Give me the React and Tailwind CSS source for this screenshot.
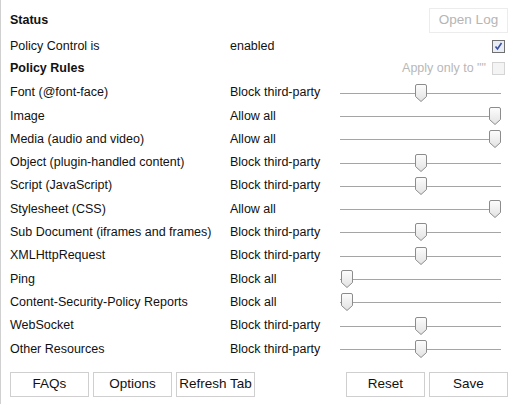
import React, { useState } from 'react';

const LEVELS = ['Block all', 'Block third-party', 'Allow all'];

const rules = [
  { name: 'Font (@font-face)', level: 1 },
  { name: 'Image', level: 2 },
  { name: 'Media (audio and video)', level: 2 },
  { name: 'Object (plugin-handled content)', level: 1 },
  { name: 'Script (JavaScript)', level: 1 },
  { name: 'Stylesheet (CSS)', level: 2 },
  { name: 'Sub Document (iframes and frames)', level: 1 },
  { name: 'XMLHttpRequest', level: 1 },
  { name: 'Ping', level: 0 },
  { name: 'Content-Security-Policy Reports', level: 0 },
  { name: 'WebSocket', level: 1 },
  { name: 'Other Resources', level: 1 },
];

const Thumb = () => (
  <svg width="12" height="18" viewBox="0 0 12 18" className="block">
    <defs>
      <linearGradient id="thumbFill" x1="0" y1="0" x2="0" y2="1">
        <stop offset="0" stopColor="#fdfdfd" />
        <stop offset="1" stopColor="#e2e2e2" />
      </linearGradient>
    </defs>
    <path
      d="M2 0.5 H10 Q11.5 0.5 11.5 2 V12.5 L6 17.5 L0.5 12.5 V2 Q0.5 0.5 2 0.5 Z"
      fill="url(#thumbFill)"
      stroke="#8c8c8c"
    />
  </svg>
);

const Slider = ({ value }) => {
  // thumb centre runs from 6px to 154px on a 161px track
  const left = 1 + value * 74;
  return (
    <div className="relative h-[18px] w-[161px]">
      <div className="absolute left-0 right-0 top-[9px] h-px bg-[#a5a5a5]" />
      <div className="absolute top-0" style={{ left }}>
        <Thumb />
      </div>
    </div>
  );
};

const Checkbox = ({ checked, disabled }) => (
  <div
    className={`flex h-[13px] w-[13px] items-center justify-center border ${
      disabled ? 'border-[#d5d5d5] bg-[#f4f4f4]' : 'border-[#707070] bg-[#e8ecf4]'
    }`}
  >
    {checked && (
      <svg width="9" height="9" viewBox="0 0 9 9">
        <path d="M1.5 4.5 L3.5 7 L7.5 1" fill="none" stroke="#3b4fa0" strokeWidth="1.6" />
      </svg>
    )}
  </div>
);

const Button = ({ children, disabled }) => (
  <button
    className={`h-[25px] w-[79px] border bg-white text-[13.5px] ${
      disabled ? 'border-[#ececec] text-[#b5b5b5]' : 'border-[#cfcfcf] text-[#111]'
    }`}
  >
    {children}
  </button>
);

export default function App() {
  const [items] = useState(rules);

  return (
    <div
      className="h-[404px] w-[517px] border-l border-[#d0d0d0] bg-white pl-[9px] pr-[9px] text-[12.5px] text-[#111]"
      style={{ fontFamily: '"Liberation Sans", Arial, sans-serif' }}
    >
      <div className="flex h-[36px] items-center justify-between pt-[5px]">
        <span className="font-bold">Status</span>
        <Button disabled>Open Log</Button>
      </div>
      <div className="flex h-[20px] items-center">
        <span className="w-[220px]">Policy Control is</span>
        <span className="flex-1">enabled</span>
        <span className="mr-[3px]">
          <Checkbox checked />
        </span>
      </div>
      <div className="flex h-[25px] items-center justify-between">
        <span className="font-bold">Policy Rules</span>
        <div className="mr-[3px] flex items-center gap-[6px] text-[#b8b8b8]">
          <span>Apply only to ""</span>
          <Checkbox disabled />
        </div>
      </div>
      <div className="flex flex-col">
        {items.map((r) => (
          <div key={r.name} className="flex h-[23.3px] items-center">
            <span className="w-[220px]">{r.name}</span>
            <span className="w-[110px]">{LEVELS[r.level]}</span>
            <Slider value={r.level} />
          </div>
        ))}
      </div>
      <div className="mt-[11px] flex justify-between">
        <div className="flex gap-[4px]">
          <Button>FAQs</Button>
          <Button>Options</Button>
          <Button>Refresh Tab</Button>
        </div>
        <div className="flex gap-[4px]">
          <Button>Reset</Button>
          <Button>Save</Button>
        </div>
      </div>
    </div>
  );
}
